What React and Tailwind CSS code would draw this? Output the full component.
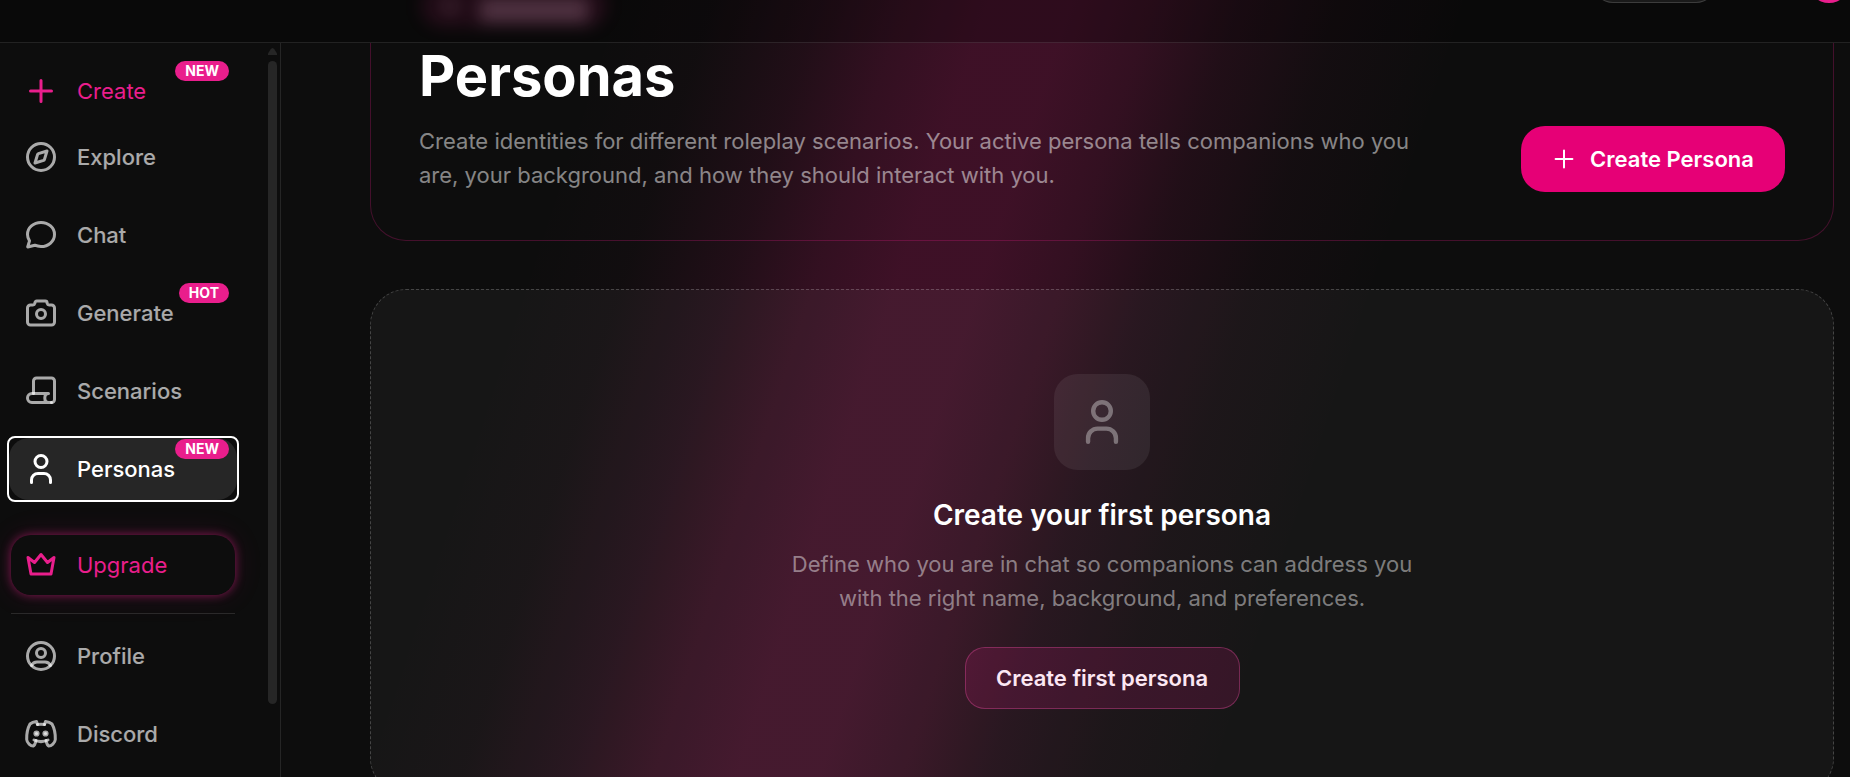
import React from "react";

const iconPaths = {
  plus: <path d="M15 4.500v21M4.500 15h21" />,
  compass: (
    <>
      <circle cx="15" cy="15" r="13.5" />
      <path d="M21 9l-2.6 8.6a1.2 1.2 0 0 1-.8.8L9 21l2.6-8.6a1.2 1.2 0 0 1 .8-.8z" />
    </>
  ),
  chat: (
    <path d="M15 2.5c7.5 0 13.5 5.300 13.500 12S22.500 26.500 15 26.500c-2.200 0-4.300-.4-6.200-1.300L1.700 27l1.800-6.200C2.200 18.900 1.500 16.800 1.500 14.500c0-6.700 6-12 13.500-12z" />
  ),
  camera: (
    <>
      <path d="M4.500 7h2.300a2 2 0 0 0 2-1.500l.2-.8A1.700 1.700 0 0 1 10.700 3h8.600A1.700 1.700 0 0 1 21 4.700l.2.800a2 2 0 0 0 2 1.500h2.300a3 3 0 0 1 3 3v14a3 3 0 0 1-3 3h-21a3 3 0 0 1-3-3V10a3 3 0 0 1 3-3z" />
      <circle cx="15" cy="16" r="4.500" />
    </>
  ),
  scroll: (
    <>
      <path d="M7.500 17.500V5a3 3 0 0 1 3-3h15a3 3 0 0 1 3 3v18.500a3 3 0 0 1-3 3" />
      <path d="M22.500 17.500H6a4.500 4.500 0 0 0 0 9h19.500M22.500 17.500c-2.500 0-3.700 2-3.700 4.500s1.200 4.500 3.700 4.500" />
    </>
  ),
  person: (
    <>
      <circle cx="15" cy="7.500" r="6" />
      <path d="M5.500 28.500V26a6.500 6.500 0 0 1 6.500-6.500h6a6.500 6.500 0 0 1 6.500 6.500v2.500" />
    </>
  ),
  crown: <path d="M2 7.500l6.500 5L15 4.500l6.500 8 6.500-5-3 16.500H5z" />,
  profile: (
    <>
      <circle cx="15" cy="15" r="13.500" />
      <circle cx="15" cy="12" r="4.500" />
      <path d="M5.500 24.500c1.200-2.400 3.200-3.500 5.500-3.500h8c2.300 0 4.300 1.100 5.500 3.500" />
    </>
  ),
  discord: (
    <>
      <path d="M11.500 5.500l-1-3C7.500 3 5.300 4 4 5 1.500 9.500.5 14.500.7 20.500c.2 3.600 4 6.300 6.600 6.500.8-.2 2.200-3 2.700-5.500" />
      <path d="M18.500 5.500l1-3c3 .5 5.200 1.500 6.500 2.500 2.500 4.500 3.500 9.500 3.300 15.500-.2 3.600-4 6.300-6.600 6.500-.8-.2-2.200-3-2.700-5.500" />
      <path d="M11.500 5.500a22 22 0 0 1 7 0M8 21c4.300 2 9.700 2 14 0" />
      <circle cx="10.500" cy="14.500" r="1.600" fill="currentColor" />
      <circle cx="19.500" cy="14.500" r="1.600" fill="currentColor" />
    </>
  ),
};

function Icon({ name, className = "size-[30px]", strokeWidth = 3 }) {
  return (
    <svg
      viewBox="0 0 30 30"
      fill="none"
      stroke="currentColor"
      strokeWidth={strokeWidth}
      strokeLinecap="round"
      strokeLinejoin="round"
      className={`shrink-0 overflow-visible ${className}`}
      aria-hidden="true"
    >
      {iconPaths[name]}
    </svg>
  );
}

const mainLinks = [
  { label: "Explore", icon: "compass" },
  { label: "Chat", icon: "chat" },
  { label: "Generate", icon: "camera", badge: "HOT" },
  { label: "Scenarios", icon: "scroll" },
  { label: "Personas", icon: "person", badge: "NEW", active: true },
];

const accountLinks = [
  { label: "Profile", icon: "profile" },
  { label: "Discord", icon: "discord" },
];

function NavItem({ label, icon, badge, active, accent }) {
  let tone = "text-white/65 font-medium";
  if (accent) tone = "text-[#e91e8c]";
  if (active) tone = "text-white font-medium bg-[#262626]";

  return (
    <a
      href="#"
      className={`relative block rounded-md ${
        active ? "outline-2 outline-white" : ""
      }`}
    >
      <span
        className={`flex h-[62px] items-center gap-[21px] rounded-[20px] px-[17px] text-[22px] ${tone}`}
      >
        <Icon name={icon} />
        {label}
      </span>
      {badge && (
        <span className="absolute top-px right-2 h-5 rounded-full bg-[#e91e8c] px-[10px] text-sm leading-[19px] font-bold text-white">
          {badge}
        </span>
      )}
    </a>
  );
}

function Header() {
  return (
    <header className="relative flex h-[43px] shrink-0 items-start justify-end gap-[92px] overflow-hidden border-b border-white/10 bg-black/25">
      <div className="absolute -top-4 left-[420px] flex h-11 w-[188px] items-center gap-5 rounded-full bg-[#e91e8c]/10 px-5 blur-[8px]">
        <span className="size-5 rounded-full bg-[#6b4a5a]/30" />
        <span className="mt-2 h-6 flex-1 bg-[#7d5a6b]/50" />
      </div>
      <div className="-mt-[45px] h-12 w-[123px] rounded-[20px] border border-white/15 bg-[#1a1a1a]" />
      <div className="-mt-[39px] size-[42px] rounded-full bg-[#e91e8c]" />
    </header>
  );
}

function Sidebar() {
  return (
    <aside className="flex w-[281px] shrink-0 border-r border-white/10 bg-[#0d0d0d]">
      <nav className="flex flex-1 flex-col pt-[17px] pr-[31px] pl-[9px]">
        <NavItem label="Create" icon="plus" badge="NEW" accent />
        <div className="mt-1 flex flex-col gap-4">
          {mainLinks.map((link) => (
            <NavItem key={link.label} {...link} />
          ))}
        </div>
        <a
          href="#"
          className="mx-0.5 mt-[35px] flex h-[60px] shrink-0 items-center gap-[21px] rounded-[20px] px-[15px] text-[22px] text-[#e91e8c] shadow-[0_0_10px_rgba(233,30,140,0.5),0_0_30px_rgba(233,30,140,0.12)]"
        >
          <Icon name="crown" />
          Upgrade
        </a>
        <hr className="mx-0.5 mt-[18px] border-white/12" />
        <div className="mt-[11px] flex flex-col gap-4">
          {accountLinks.map((link) => (
            <NavItem key={link.label} {...link} />
          ))}
        </div>
      </nav>
      <div className="mr-[3px] flex w-[9px] flex-col items-center pt-[5px]">
        <svg viewBox="0 0 9 7" className="h-[7px] w-[9px] fill-[#262626]">
          <path d="M4.500 0Q5.500 0 6.500 1.500L9 5.500V7H0V5.500L2.500 1.500Q3.500 0 4.500 0z" />
        </svg>
        <div className="mt-1.5 h-[643px] w-full rounded-full bg-[#262626]" />
      </div>
    </aside>
  );
}

function Hero() {
  return (
    <section className="flex items-end justify-between gap-12 rounded-b-[36px] border border-t-0 border-[#e91e8c]/25 px-12 pb-12">
      <div>
        <h1 className="text-[56px] leading-[66px] font-bold text-white">
          Personas
        </h1>
        <p className="mt-[15px] max-w-[1008px] text-[22px] leading-[34px] text-white/50">
          Create identities for different roleplay scenarios. Your active
          persona tells companions who you are, your background, and how they
          should interact with you.
        </p>
      </div>
      <button className="flex h-[66px] w-[264px] shrink-0 items-center justify-center gap-[14px] rounded-3xl bg-[#e60076] text-[22px] font-semibold text-white">
        <Icon name="plus" className="size-6" strokeWidth={2.5} />
        Create Persona
      </button>
    </section>
  );
}

function EmptyState() {
  return (
    <section className="mt-12 flex flex-col items-center rounded-[36px] border border-dashed border-white/20 bg-white/4 py-[84px] text-center">
      <div className="flex size-24 items-center justify-center rounded-3xl bg-white/7 text-white/35">
        <Icon name="person" className="size-[44px]" />
      </div>
      <h2 className="mt-[27px] text-[28px] leading-9 font-semibold text-white">
        Create your first persona
      </h2>
      <p className="mt-[14px] max-w-[640px] text-[22px] leading-[34px] text-white/45">
        Define who you are in chat so companions can address you with the right
        name, background, and preferences.
      </p>
      <button className="mt-8 h-[62px] w-[275px] rounded-[20px] border border-[#f04fa5]/35 bg-[#e91e8c]/15 text-[22px] font-semibold text-[#fce7f3]">
        Create first persona
      </button>
    </section>
  );
}

export default function App() {
  return (
    <div className="flex h-screen flex-col overflow-hidden bg-[#0d0d0d] bg-[linear-gradient(108deg,rgba(236,30,130,0)_29%,rgba(236,30,130,0.02)_34%,rgba(236,30,130,0.09)_39%,rgba(236,30,130,0.17)_43%,rgba(236,30,130,0.22)_47%,rgba(236,30,130,0.22)_51%,rgba(236,30,130,0.17)_55%,rgba(236,30,130,0.09)_59%,rgba(236,30,130,0.03)_64%,rgba(236,30,130,0)_70%)] font-['Inter',sans-serif]">
      <Header />
      <div className="flex min-h-0 flex-1">
        <Sidebar />
        <main className="min-w-0 flex-1 pr-4 pl-[89px]">
          <Hero />
          <EmptyState />
        </main>
      </div>
    </div>
  );
}
